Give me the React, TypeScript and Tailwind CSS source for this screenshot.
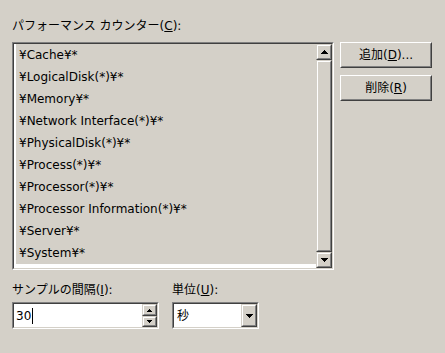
import React from "react";

const FONT = { fontFamily: '"DejaVu Sans", "Noto Sans CJK JP", sans-serif' };

function UpTri({ size = 7 }: { size?: number }) {
  const h = Math.ceil(size / 2);
  return (
    <svg width={size} height={h} viewBox={`0 0 ${size} ${h}`} shapeRendering="crispEdges">
      <polygon points={`0,${h} ${size / 2},0 ${size},${h}`} fill="#000" />
    </svg>
  );
}
function DownTri({ size = 7 }: { size?: number }) {
  const h = Math.ceil(size / 2);
  return (
    <svg width={size} height={h} viewBox={`0 0 ${size} ${h}`} shapeRendering="crispEdges">
      <polygon points={`0,0 ${size},0 ${size / 2},${h}`} fill="#000" />
    </svg>
  );
}

function ScrollBtn({ children, className = "" }: { children: React.ReactNode; className?: string }) {
  return (
    <div className={`border border-t-[#d4d0c8] border-l-[#d4d0c8] border-b-[#404040] border-r-[#404040] ${className}`}>
      <div className="w-full h-full border border-t-white border-l-white border-b-[#808080] border-r-[#808080] bg-[#d4d0c8] flex items-center justify-center">
        {children}
      </div>
    </div>
  );
}

function Button({ children }: { children: React.ReactNode }) {
  return (
    <div className="w-[92px] h-[26px] border border-t-white border-l-white border-b-[#404040] border-r-[#404040]">
      <div className="w-full h-full border border-t-[#d4d0c8] border-l-[#d4d0c8] border-b-[#808080] border-r-[#808080] flex items-center justify-center text-[12px] text-black">
        {children}
      </div>
    </div>
  );
}

const items = [
  "¥Cache¥*",
  "¥LogicalDisk(*)¥*",
  "¥Memory¥*",
  "¥Network Interface(*)¥*",
  "¥PhysicalDisk(*)¥*",
  "¥Process(*)¥*",
  "¥Processor(*)¥*",
  "¥Processor Information(*)¥*",
  "¥Server¥*",
  "¥System¥*",
];

export default function App() {
  return (
    <div className="w-[445px] h-[353px] bg-[#d4d0c8] text-black text-[12px] pl-[12px] pt-[18px] flex flex-col" style={FONT}>
      <div className="h-[16px] leading-[16px]">
        パフォーマンス カウンター(<span className="underline">C</span>):
      </div>
      <div className="mt-[8px] flex">
        {/* list box */}
        <div className="w-[322px] h-[228px] border border-t-[#808080] border-l-[#808080] border-b-white border-r-white">
          <div className="w-full h-full border border-t-[#404040] border-l-[#404040] border-b-[#d4d0c8] border-r-[#d4d0c8] bg-white flex">
            <div className="flex-1 flex flex-col pl-[2px]">
              {items.map((it) => (
                <div key={it} className="h-[22px] leading-[22px] bg-[#d4d0c8] pl-[3px] whitespace-pre">
                  {it}
                </div>
              ))}
            </div>
            <div className="w-[16px] flex flex-col">
              <ScrollBtn className="h-[16px]">
                <UpTri />
              </ScrollBtn>
              <ScrollBtn className="flex-1">
                <span />
              </ScrollBtn>
              <ScrollBtn className="h-[16px]">
                <DownTri />
              </ScrollBtn>
            </div>
          </div>
        </div>
        <div className="ml-[6px] flex flex-col gap-[7px]">
          <Button>
            追加(<span className="underline">D</span>)...
          </Button>
          <Button>
            削除(<span className="underline">R</span>)
          </Button>
        </div>
      </div>
      <div className="mt-[12px] flex">
        <div className="w-[160px] h-[16px] leading-[16px]">
          サンプルの間隔(<span className="underline">I</span>):
        </div>
        <div className="h-[16px] leading-[16px]">
          単位(<span className="underline">U</span>):
        </div>
      </div>
      <div className="mt-[4px] flex">
        {/* spin edit */}
        <div className="w-[147px] h-[27px] border border-t-[#808080] border-l-[#808080] border-b-white border-r-white">
          <div className="w-full h-full border border-t-[#404040] border-l-[#404040] border-b-[#d4d0c8] border-r-[#d4d0c8] bg-white flex">
            <div className="flex-1 flex items-center pl-[2px]">
              <span className="leading-[16px]">30</span>
              <span className="w-[1px] h-[16px] bg-black ml-[1px]" />
            </div>
            <div className="w-[15px] flex flex-col">
              <ScrollBtn className="h-[12px]">
                <UpTri size={5} />
              </ScrollBtn>
              <ScrollBtn className="h-[11px]">
                <DownTri size={5} />
              </ScrollBtn>
            </div>
          </div>
        </div>
        {/* combo */}
        <div className="ml-[13px] w-[87px] h-[27px] border border-t-[#808080] border-l-[#808080] border-b-white border-r-white">
          <div className="w-full h-full border border-t-[#404040] border-l-[#404040] border-b-[#d4d0c8] border-r-[#d4d0c8] bg-white flex">
            <div className="flex-1 flex items-center pl-[3px]">秒</div>
            <ScrollBtn className="w-[16px] h-full">
              <DownTri />
            </ScrollBtn>
          </div>
        </div>
      </div>
    </div>
  );
}
